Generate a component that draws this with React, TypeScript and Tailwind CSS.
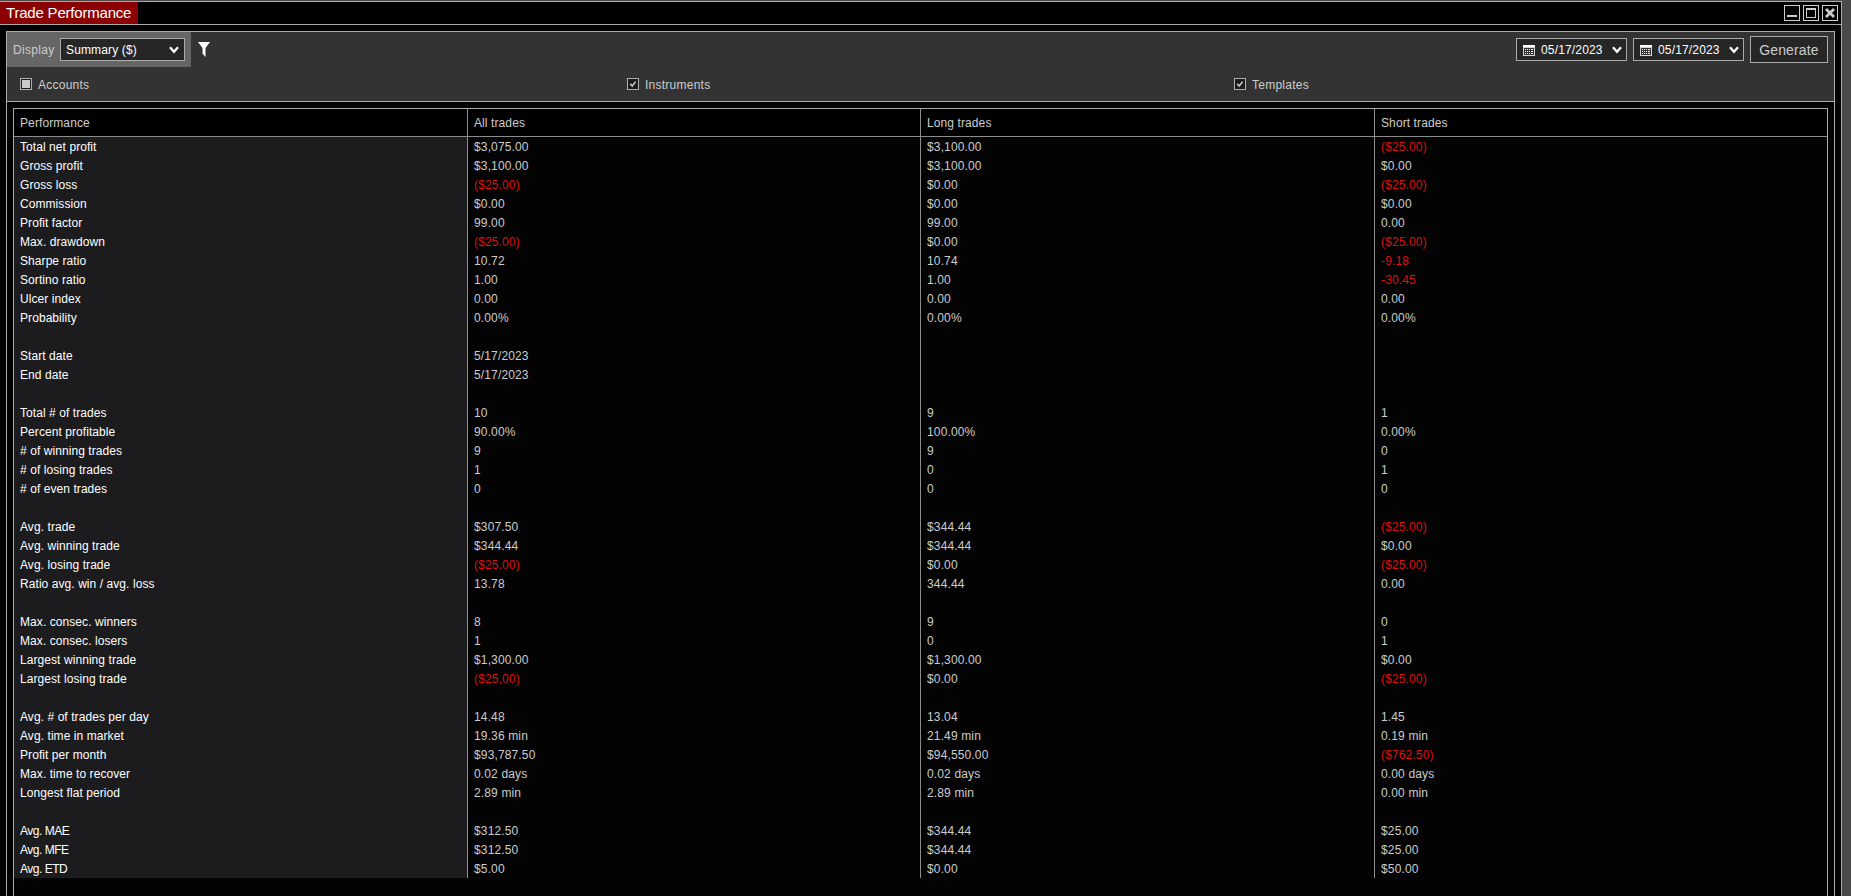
import clsx from "clsx";

type Row = [string, string, string, string] | null;

const ROWS: Row[] = [
  ["Total net profit", "$3,075.00", "$3,100.00", "($25.00)"],
  ["Gross profit", "$3,100.00", "$3,100.00", "$0.00"],
  ["Gross loss", "($25.00)", "$0.00", "($25.00)"],
  ["Commission", "$0.00", "$0.00", "$0.00"],
  ["Profit factor", "99.00", "99.00", "0.00"],
  ["Max. drawdown", "($25.00)", "$0.00", "($25.00)"],
  ["Sharpe ratio", "10.72", "10.74", "-9.18"],
  ["Sortino ratio", "1.00", "1.00", "-30.45"],
  ["Ulcer index", "0.00", "0.00", "0.00"],
  ["Probability", "0.00%", "0.00%", "0.00%"],
  null,
  ["Start date", "5/17/2023", "", ""],
  ["End date", "5/17/2023", "", ""],
  null,
  ["Total # of trades", "10", "9", "1"],
  ["Percent profitable", "90.00%", "100.00%", "0.00%"],
  ["# of winning trades", "9", "9", "0"],
  ["# of losing trades", "1", "0", "1"],
  ["# of even trades", "0", "0", "0"],
  null,
  ["Avg. trade", "$307.50", "$344.44", "($25.00)"],
  ["Avg. winning trade", "$344.44", "$344.44", "$0.00"],
  ["Avg. losing trade", "($25.00)", "$0.00", "($25.00)"],
  ["Ratio avg. win / avg. loss", "13.78", "344.44", "0.00"],
  null,
  ["Max. consec. winners", "8", "9", "0"],
  ["Max. consec. losers", "1", "0", "1"],
  ["Largest winning trade", "$1,300.00", "$1,300.00", "$0.00"],
  ["Largest losing trade", "($25.00)", "$0.00", "($25.00)"],
  null,
  ["Avg. # of trades per day", "14.48", "13.04", "1.45"],
  ["Avg. time in market", "19.36 min", "21.49 min", "0.19 min"],
  ["Profit per month", "$93,787.50", "$94,550.00", "($762.50)"],
  ["Max. time to recover", "0.02 days", "0.02 days", "0.00 days"],
  ["Longest flat period", "2.89 min", "2.89 min", "0.00 min"],
  null,
  ["Avg. MAE", "$312.50", "$344.44", "$25.00"],
  ["Avg. MFE", "$312.50", "$344.44", "$25.00"],
  ["Avg. ETD", "$5.00", "$0.00", "$50.00"],
];

const COLUMNS = ["Performance", "All trades", "Long trades", "Short trades"];

const GRID = "grid grid-cols-[454px_453px_454px_452px]";

function isNegative(value: string) {
  return value.startsWith("(") || value.startsWith("-");
}

// labels ending in an acronym (MAE, MFE, ETD) are set tighter
function labelTracking(label: string) {
  return /[A-Z]{3}$/.test(label) ? "tracking-[-0.5px]" : "tracking-[0.07px]";
}

function Chevron() {
  return (
    <svg width="10" height="8" viewBox="0 0 10 8" fill="none" className="shrink-0">
      <path d="M1 1.2 5 5.8 9 1.2" stroke="#fff" strokeWidth="2.2" />
    </svg>
  );
}

function CalendarIcon() {
  return (
    <svg width="12" height="12" viewBox="0 0 12 12" shapeRendering="crispEdges" className="shrink-0">
      <path d="M0 1h12v11H0z" fill="#d4d4d4" />
      <path d="M0 1h12v2H0z" fill="#fff" />
      <path d="M1 4h10v7H1z" fill="#333" />
      <path
        d="M2 5h1v1H2zM4 5h1v1H4zM6 5h1v1H6zM8 5h2v1H8zM2 7h1v1H2zM4 7h1v1H4zM6 7h1v1H6zM8 7h2v1H8zM2 9h1v1H2zM4 9h1v1H4zM6 9h1v1H6zM8 9h2v1H8z"
        fill="#f0f0f0"
      />
    </svg>
  );
}

function DatePicker({ value }: { value: string }) {
  return (
    <div className="flex h-[23px] w-[111px] items-center border border-[#ababab] bg-[#262626] pr-1 pl-1.5 text-white">
      <CalendarIcon />
      <span className="ml-1.5 flex-1 tracking-[0.16px]">{value}</span>
      <Chevron />
    </div>
  );
}

function Checkbox({ label, partial }: { label: string; partial?: boolean }) {
  return (
    <div className="flex items-center">
      <span className="flex h-3 w-3 items-center justify-center border border-[#b0b0b0] bg-[#1c1c1c]">
        {partial ? (
          <span className="h-2 w-2 bg-[#cccccc]" />
        ) : (
          <svg width="8" height="8" viewBox="0 0 8 8" fill="none">
            <path d="M1.2 3.8 3.2 6 6.6 1.6" stroke="#ccc" strokeWidth="1.5" />
          </svg>
        )}
      </span>
      <span className="ml-1.5 pt-0.5 tracking-[0.25px]">{label}</span>
    </div>
  );
}

function WindowButtons() {
  return (
    <div className="flex gap-[3px]">
      <span className="flex h-4 w-4 items-end justify-center border border-[#cccccc] pb-[3px]">
        <span className="h-0.5 w-2.5 bg-[#cccccc]" />
      </span>
      <span className="flex h-4 w-4 items-center justify-center border border-[#cccccc]">
        <span className="h-2.5 w-2.5 border border-t-2 border-[#cccccc]" />
      </span>
      <span className="flex h-4 w-4 items-center justify-center border border-[#cccccc]">
        <svg width="10" height="10" viewBox="0 0 10 10">
          <path d="M1 1l8 8M9 1L1 9" stroke="#ccc" strokeWidth="2.8" />
        </svg>
      </span>
    </div>
  );
}

function Toolbar() {
  return (
    <div className="h-[70px] border-b border-[#ababab] bg-[#333333]">
      <div className="flex h-[35px] items-center">
        <div className="flex h-[35px] w-[184px] items-center bg-[#666666] pl-1.5 text-[#cccccc]">
          <span className="w-[47px] tracking-[0.3px]">Display</span>
          <div className="flex h-[23px] w-[125px] items-center justify-between border border-[#ababab] bg-[#262626] pr-[5px] pl-[5px] text-white">
            <span className="tracking-[0.15px]">Summary ($)</span>
            <Chevron />
          </div>
        </div>
        <svg width="12" height="15" viewBox="0 0 12 15" className="ml-[7px]">
          <path d="M0 0h12L7.500 6v9L4.500 11.500V6z" fill="#fff" />
        </svg>
        <div className="mr-1.5 ml-auto flex items-center gap-1.5">
          <DatePicker value="05/17/2023" />
          <DatePicker value="05/17/2023" />
          <button className="h-[27px] w-[78px] border border-[#ababab] bg-[#262626] text-sm tracking-[0.15px] text-[#cccccc]">
            Generate
          </button>
        </div>
      </div>
      <div className="grid h-[34px] grid-cols-[607px_607px_1fr] items-center pl-[13px] text-[#cccccc]">
        <Checkbox label="Accounts" partial />
        <Checkbox label="Instruments" />
        <Checkbox label="Templates" />
      </div>
    </div>
  );
}

function PerformanceTable() {
  return (
    <div className="mx-1.5 mt-1.5 flex-1 border-x border-t border-[#ababab]">
      <div className={clsx(GRID, "h-7 border-b border-[#8c8c8c] bg-black leading-[29px] text-[#cccccc]")}>
        {COLUMNS.map((name) => (
          <div key={name} className="h-[27px] border-r border-[#8c8c8c] pl-1.5 tracking-[0.1px] last:border-r-0">
            {name}
          </div>
        ))}
      </div>
      {ROWS.map((row, i) => (
        <div key={i} className={clsx(GRID, "h-[19px] leading-[21px]")}>
          {(row ?? ["", "", "", ""]).map((value, col) => (
            <div
              key={col}
              className={clsx(
                "h-[19px] border-r border-[#8c8c8c] pl-1.5 last:border-r-0",
                col === 0 && "bg-[#1c1c1e] text-white",
                col === 0 && labelTracking(value),
                col > 0 && "tracking-[0.14px]",
                col > 0 && (isNegative(value) ? "text-[#dc1010]" : "text-[#cccccc]"),
              )}
            >
              {value}
            </div>
          ))}
        </div>
      ))}
    </div>
  );
}

export default function App() {
  return (
    <div className="h-[896px] w-[1851px] overflow-hidden bg-[#4b4a48] pt-px font-['Liberation_Sans',Arial,sans-serif] text-xs">
      <div className="flex h-[895px] w-[1842px] flex-col border-t border-r border-[#ababab] bg-[#030303]">
        <div className="flex h-[23px] shrink-0 items-center justify-between border-b border-[#ababab] bg-black pr-[3px]">
          <div className="h-[22px] w-[138px] bg-[#8b0000] pl-1.5 text-[15px] leading-[22px] tracking-[-0.2px] text-white">
            Trade Performance
          </div>
          <WindowButtons />
        </div>
        <div className="mt-1.5 mr-1.5 ml-1.5 flex min-h-0 flex-1 flex-col border-x border-t border-[#ababab]">
          <Toolbar />
          <PerformanceTable />
        </div>
      </div>
    </div>
  );
}
